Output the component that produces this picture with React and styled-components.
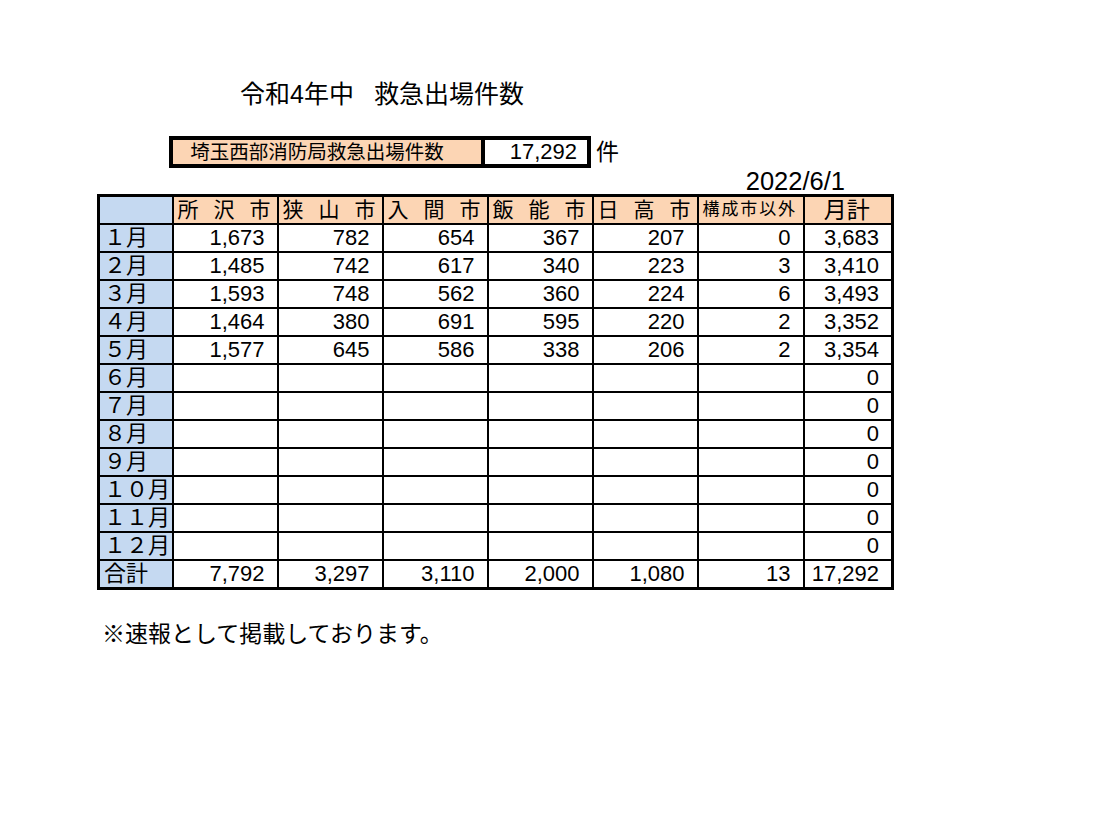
import styled, { createGlobalStyle } from "styled-components";

const GlobalStyle = createGlobalStyle`
  body {
    margin: 0;
    background: #fff;
    color: #000;
    font-family: "Liberation Sans", "Noto Sans CJK JP", sans-serif;
  }
`;

const Page = styled.div`
  width: 1120px;
  height: 814px;
  padding: 79px 0 0 97px;
  box-sizing: border-box;
`;

const Title = styled.h1`
  margin: 0 0 0 143px;
  font-size: 25px;
  font-weight: normal;
  line-height: 30px;
  white-space: nowrap;
`;

const TitleGap = styled.span`
  display: inline-block;
  width: 20px;
`;

const SummaryRow = styled.div`
  display: flex;
  align-items: center;
  gap: 5px;
  margin: 27px 0 0 72px;
`;

const SummaryBox = styled.div`
  display: grid;
  grid-template-columns: 312px 102px;
  border: 4px solid #000;
  height: 24px;
`;

const SummaryLabel = styled.div`
  background: #fcd5b4;
  border-right: 4px solid #000;
  font-size: 19.5px;
  line-height: 24px;
  text-align: center;
  padding-right: 20px;
`;

const SummaryValue = styled.div`
  background: #fff;
  font-size: 22px;
  line-height: 24px;
  text-align: right;
  padding-right: 10px;
`;

const Unit = styled.span`
  font-size: 23px;
  line-height: 30px;
`;

const DateLine = styled.div`
  width: 748px;
  text-align: right;
  font-size: 25.5px;
  line-height: 27px;
  height: 26px;
`;

const Grid = styled.table`
  border-collapse: collapse;
  table-layout: fixed;
  width: 796px;
  border: 3px solid #000;
`;

const Cell = styled.td`
  border: 2px solid #000;
  height: 26px;
  padding: 0 12px 0 4px;
  font-size: 22px;
  line-height: 26px;
  text-align: right;
  white-space: nowrap;
  overflow: hidden;
`;

const RowHead = styled(Cell)`
  background: #c5d9f1;
  text-align: left;
  font-size: 22px;
  padding: 0 2px 0 4px;
`;

const ColHead = styled(Cell)`
  background: #fcd5b4;
  text-align: ${(p) => (p.$center ? "center" : "justify")};
  text-align-last: ${(p) => (p.$center ? "center" : "justify")};
  font-size: ${(p) => (p.$small ? "17px" : p.$center ? "23px" : "21px")};
  letter-spacing: ${(p) => (p.$small ? "1.4px" : "0")};
  padding: 0 6px 0 4px;
`;

const Note = styled.p`
  margin: 29px 0 0 5px;
  font-size: 23px;
  line-height: 30px;
`;

const cities = ["所沢市", "狭山市", "入間市", "飯能市", "日高市"];

const months = [
  ["１月", [1673, 782, 654, 367, 207, 0]],
  ["２月", [1485, 742, 617, 340, 223, 3]],
  ["３月", [1593, 748, 562, 360, 224, 6]],
  ["４月", [1464, 380, 691, 595, 220, 2]],
  ["５月", [1577, 645, 586, 338, 206, 2]],
  ["６月", null],
  ["７月", null],
  ["８月", null],
  ["９月", null],
  ["１０月", null],
  ["１１月", null],
  ["１２月", null],
];

const fmt = (n) => n.toLocaleString("en-US");
const sum = (a) => a.reduce((s, v) => s + v, 0);

export default function App() {
  const totals = [0, 1, 2, 3, 4, 5].map((i) =>
    sum(months.map(([, v]) => (v ? v[i] : 0)))
  );

  return (
    <Page>
      <GlobalStyle />
      <Title>
        令和4年中
        <TitleGap />
        救急出場件数
      </Title>

      <SummaryRow>
        <SummaryBox>
          <SummaryLabel>埼玉西部消防局救急出場件数</SummaryLabel>
          <SummaryValue>{fmt(sum(totals))}</SummaryValue>
        </SummaryBox>
        <Unit>件</Unit>
      </SummaryRow>

      <DateLine>2022/6/1</DateLine>

      <Grid>
        <colgroup>
          <col style={{ width: 74 }} />
          {cities.map((c) => (
            <col key={c} style={{ width: 105 }} />
          ))}
          <col style={{ width: 106 }} />
          <col style={{ width: 89 }} />
        </colgroup>
        <tbody>
          <tr>
            <RowHead />
            {cities.map((c) => (
              <ColHead key={c}>{c}</ColHead>
            ))}
            <ColHead $small>構成市以外</ColHead>
            <ColHead $center>月計</ColHead>
          </tr>
          {months.map(([label, vals]) => (
            <tr key={label}>
              <RowHead>{label}</RowHead>
              {[0, 1, 2, 3, 4, 5].map((i) => (
                <Cell key={i}>{vals ? fmt(vals[i]) : ""}</Cell>
              ))}
              <Cell>{fmt(vals ? sum(vals) : 0)}</Cell>
            </tr>
          ))}
          <tr>
            <RowHead>合計</RowHead>
            {totals.map((t, i) => (
              <Cell key={i}>{fmt(t)}</Cell>
            ))}
            <Cell>{fmt(sum(totals))}</Cell>
          </tr>
        </tbody>
      </Grid>

      <Note>※速報として掲載しております。</Note>
    </Page>
  );
}
